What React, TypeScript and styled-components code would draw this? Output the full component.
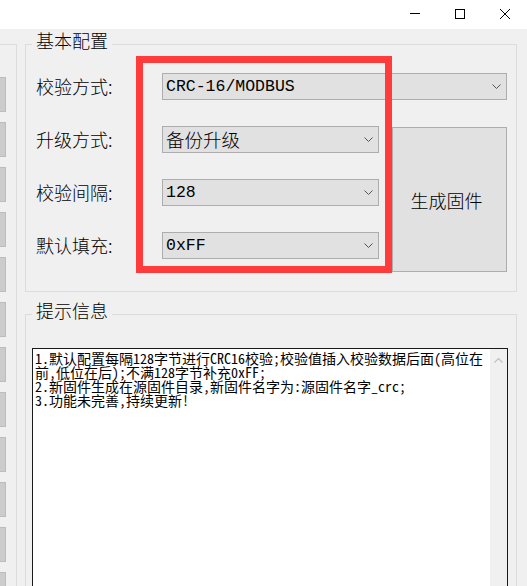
import React from 'react';
import styled, { createGlobalStyle } from 'styled-components';

const GlobalStyle = createGlobalStyle`
  html, body { margin: 0; padding: 0; background: #f0f0f0; overflow: hidden; }
  body { font-family: "Noto Sans CJK SC", "Noto Sans", sans-serif; font-weight: 300; color: #000; }
  * { box-sizing: border-box; }
`;

const Window = styled.div`
  position: relative;
  width: 527px;
  height: 586px;
  overflow: hidden;
  background: #f0f0f0;
`;

const TitleBar = styled.div`
  height: 29px;
  background: #ffffff;
  display: flex;
  justify-content: flex-end;
`;

const CaptionButton = styled.div`
  width: 45px;
  height: 29px;
  padding-top: 9px;
  display: flex;
  justify-content: center;
  align-items: flex-start;
`;

const Body = styled.div`
  display: flex;
  align-items: flex-start;
  padding-top: 15px;
  gap: 8px;
`;

const SidePanel = styled.div`
  width: 17px;
  height: 560px;
  border-top: 1px solid #dcdcdc;
  border-right: 1px solid #dcdcdc;
  padding-top: 32px;
  display: flex;
  flex-direction: column;
  gap: 10px;
`;

const SideButton = styled.div`
  width: 6px;
  height: 35px;
  flex: none;
  background: #cccccc;
  border: 1px solid #bcbcbc;
  border-left: none;
`;

const Column = styled.div`
  width: 492px;
  display: flex;
  flex-direction: column;
  gap: 22px;
`;

const Group = styled.div<{ $pad: string }>`
  position: relative;
  border: 1px solid #dcdcdc;
  padding: ${(p) => p.$pad};
`;

const Legend = styled.span`
  position: absolute;
  top: -14px;
  left: 6px;
  padding: 0 4px;
  background: #f0f0f0;
  font-size: 18px;
  line-height: 18px;
  white-space: nowrap;
`;

const ConfigGrid = styled.div`
  display: grid;
  grid-template-columns: 126px 217px 13px 115px;
  grid-template-rows: repeat(4, 27px);
  row-gap: 26px;
`;

const Label = styled.div<{ $row: number }>`
  grid-column: 1;
  grid-row: ${(p) => p.$row};
  font-size: 18px;
  line-height: 27px;
  white-space: nowrap;
`;

const Combo = styled.div<{ $row: number; $wide?: boolean }>`
  grid-row: ${(p) => p.$row};
  grid-column: ${(p) => (p.$wide ? '2 / 5' : '2')};
  height: 27px;
  border: 1px solid #adadad;
  background: #e1e1e1;
  display: flex;
  align-items: center;
  justify-content: space-between;
  padding: 0 5px 0 3px;
`;

const ComboText = styled.span<{ $cjk?: boolean }>`
  font-family: ${(p) =>
    p.$cjk ? '"Noto Sans CJK SC", sans-serif' : '"Liberation Mono", "Noto Sans CJK SC", monospace'};
  font-size: ${(p) => (p.$cjk ? '18.5px' : '16.5px')};
  font-weight: ${(p) => (p.$cjk ? 300 : 400)};
  white-space: nowrap;
  line-height: 25px;
`;

const ActionButton = styled.div`
  grid-column: 4;
  grid-row: 2 / 5;
  align-self: start;
  height: 145px;
  margin-top: 1px;
  padding-right: 6px;
  border: 1px solid #adadad;
  background: #e1e1e1;
  display: flex;
  align-items: center;
  justify-content: center;
  font-size: 18px;
`;

const TextArea = styled.div`
  height: 300px;
  border: 1px solid #1a1a1a;
  background: #ffffff;
  display: flex;
`;

const TextContent = styled.div`
  flex: 1;
  padding: 2px 0 0 2px;
  font-family: "Noto Sans Mono CJK SC", "Noto Sans CJK SC", monospace;
  font-size: 14px;
  font-weight: 400;
  line-height: 14px;
  white-space: pre;
  overflow: hidden;
`;

const ScrollBar = styled.div`
  width: 17px;
  background: #f0f0f0;
  display: flex;
  justify-content: center;
  padding-top: 9px;
`;

const Highlight = styled.div`
  position: absolute;
  left: 136px;
  top: 56px;
  width: 256px;
  height: 217px;
  border: 7px solid #ff3b3b;
  pointer-events: none;
`;

const Chevron = () => (
  <svg width="9" height="5" viewBox="0 0 9 5">
    <path d="M0.5 0.5 L4.5 4.5 L8.5 0.5" fill="none" stroke="#555" strokeWidth="1" />
  </svg>
);

const rows: { label: string; value: string; cjk?: boolean; wide?: boolean }[] = [
  { label: '校验方式:', value: 'CRC-16/MODBUS', wide: true },
  { label: '升级方式:', value: '备份升级', cjk: true },
  { label: '校验间隔:', value: '128' },
  { label: '默认填充:', value: '0xFF' },
];

const lines = [
  '1.默认配置每隔128字节进行CRC16校验;校验值插入校验数据后面(高位在',
  '前,低位在后);不满128字节补充0xFF;',
  '2.新固件生成在源固件目录,新固件名字为:源固件名字_crc;',
  '3.功能未完善,持续更新!',
];

export default function App() {
  return (
    <Window>
      <GlobalStyle />
      <TitleBar>
        <CaptionButton>
          <svg width="10" height="10" viewBox="0 0 10 10">
            <line x1="0" y1="4.5" x2="10" y2="4.5" stroke="#000" strokeWidth="1" />
          </svg>
        </CaptionButton>
        <CaptionButton>
          <svg width="10" height="10" viewBox="0 0 10 10">
            <rect x="0.5" y="0.5" width="9" height="9" fill="none" stroke="#000" strokeWidth="1" />
          </svg>
        </CaptionButton>
        <CaptionButton>
          <svg width="10" height="10" viewBox="0 0 10 10">
            <path d="M0 0 L10 10 M10 0 L0 10" stroke="#000" strokeWidth="1" />
          </svg>
        </CaptionButton>
      </TitleBar>
      <Body>
        <SidePanel>
          {Array.from({ length: 12 }).map((_, i) => (
            <SideButton key={i} />
          ))}
        </SidePanel>
        <Column>
          <Group $pad="28px 9px 32px 10px">
            <Legend>基本配置</Legend>
            <ConfigGrid>
              {rows.map((r, i) => (
                <React.Fragment key={r.label}>
                  <Label $row={i + 1}>{r.label}</Label>
                  <Combo $row={i + 1} $wide={r.wide}>
                    <ComboText $cjk={r.cjk}>{r.value}</ComboText>
                    <Chevron />
                  </Combo>
                </React.Fragment>
              ))}
              <ActionButton>生成固件</ActionButton>
            </ConfigGrid>
          </Group>
          <Group $pad="33px 8px 0 6px">
            <Legend>提示信息</Legend>
            <TextArea>
              <TextContent>{lines.join('\n')}</TextContent>
              <ScrollBar>
                <svg width="9" height="5" viewBox="0 0 9 5">
                  <path d="M0.5 4.5 L4.5 0.5 L8.5 4.5" fill="none" stroke="#c2c2c2" strokeWidth="1.2" />
                </svg>
              </ScrollBar>
            </TextArea>
          </Group>
        </Column>
      </Body>
      <Highlight />
    </Window>
  );
}
